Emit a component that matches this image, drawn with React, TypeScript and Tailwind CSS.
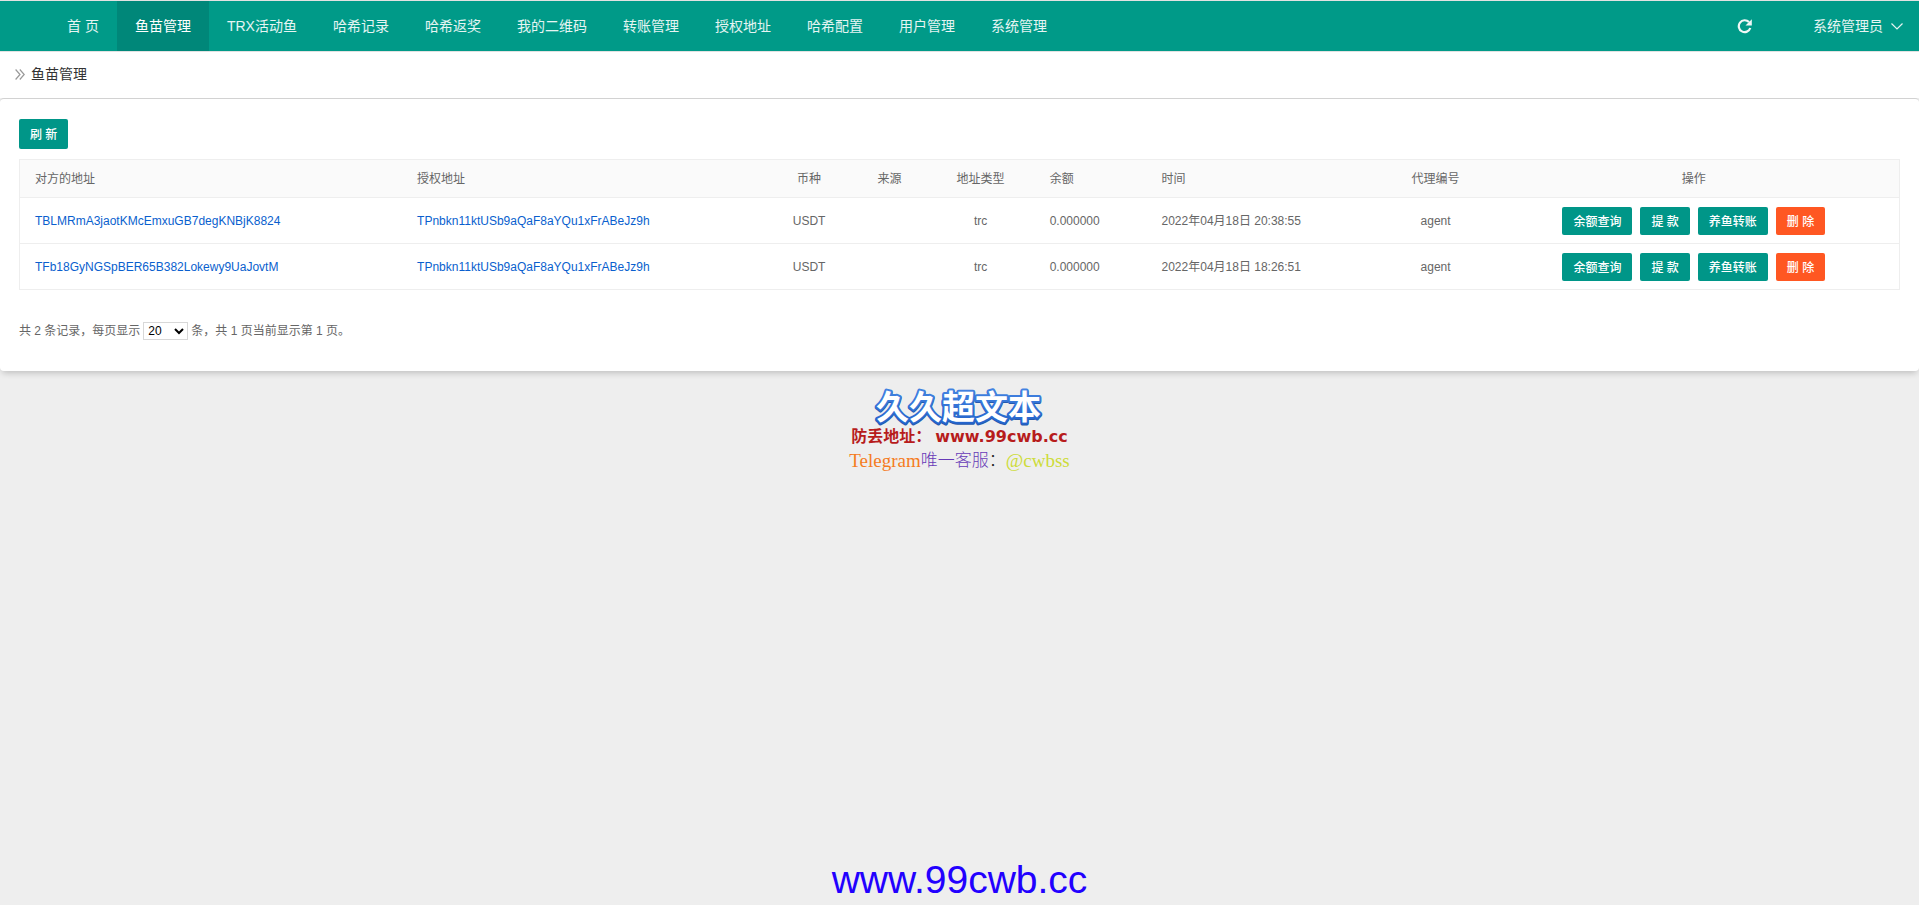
import React from 'react';

const navItems = [
  '首 页',
  '鱼苗管理',
  'TRX活动鱼',
  '哈希记录',
  '哈希返奖',
  '我的二维码',
  '转账管理',
  '授权地址',
  '哈希配置',
  '用户管理',
  '系统管理',
];

const rows = [
  {
    from: 'TBLMRmA3jaotKMcEmxuGB7degKNBjK8824',
    to: 'TPnbkn11ktUSb9aQaF8aYQu1xFrABeJz9h',
    time: '2022年04月18日 20:38:55',
  },
  {
    from: 'TFb18GyNGSpBER65B382Lokewy9UaJovtM',
    to: 'TPnbkn11ktUSb9aQaF8aYQu1xFrABeJz9h',
    time: '2022年04月18日 18:26:51',
  },
];

const columns = [
  { label: '对方的地址', cls: 'w-[20.35%] text-left' },
  { label: '授权地址', cls: 'w-[19.35%] text-left' },
  { label: '币种', cls: 'w-[4.6%] text-center' },
  { label: '来源', cls: 'w-[3.95%] text-center' },
  { label: '地址类型', cls: 'w-[5.75%] text-center' },
  { label: '余额', cls: 'w-[5.95%] text-left' },
  { label: '时间', cls: 'w-[12.55%] text-left' },
  { label: '代理编号', cls: 'w-[5.65%] text-center' },
  { label: '操作', cls: 'w-[21.85%] text-center' },
];

function ActionButton({ label, danger = false }: { label: string; danger?: boolean }) {
  return (
    <button
      type="button"
      className={
        'h-7 rounded-xs px-[11px] pt-0.5 text-xs font-medium whitespace-nowrap text-white ' +
        (danger ? 'bg-[#ff5722]' : 'bg-[#009688]')
      }
    >
      {label}
    </button>
  );
}

function Header() {
  return (
    <header className="flex h-[52px] items-stretch justify-between border-t border-b border-[#e2e2e2] bg-[#009a88] text-sm text-white/90">
      <nav className="flex pl-[49px]">
        {navItems.map((item) => (
          <a
            key={item}
            href="#"
            className={
              'flex items-center px-[18px] whitespace-nowrap ' +
              (item === '鱼苗管理' ? 'bg-[#008779] text-white' : '')
            }
          >
            {item}
          </a>
        ))}
      </nav>
      <div className="flex items-center pr-4">
        <button type="button" aria-label="刷新页面" className="mr-[61px]">
          <svg width="15" height="15" viewBox="0 0 15 15" fill="none">
            <path d="M12 3.1A5.9 5.9 0 1 0 13.3 9" stroke="#f0f7f6" strokeWidth="2.2" />
            <path d="M14.8 0.3V6.6H8.5Z" fill="#f0f7f6" />
          </svg>
        </button>
        <button type="button" className="flex items-center gap-2">
          <span>系统管理员</span>
          <svg width="12" height="7" viewBox="0 0 12 7" fill="none" stroke="#e6f3f1" strokeWidth="1.2">
            <path d="M0.5 0.5L6 6L11.5 0.5" />
          </svg>
        </button>
      </div>
    </header>
  );
}

function Pagination() {
  return (
    <div className="mt-8 flex items-center gap-[3px]">
      <label htmlFor="page-size">共 2 条记录，每页显示</label>
      <select
        id="page-size"
        defaultValue="20"
        className="h-[18px] w-[45px] border border-[#d8d8d8] bg-white text-xs text-black"
      >
        <option>20</option>
        <option>50</option>
        <option>100</option>
      </select>
      <span>条，共 1 页当前显示第 1 页。</span>
    </div>
  );
}

function BrandLogo() {
  return (
    <svg
      width="178"
      height="52"
      viewBox="0 0 178 52"
      className="font-['Noto_Sans_CJK_SC',sans-serif] text-[33px] font-bold"
      strokeLinejoin="round"
    >
      <defs>
        <linearGradient id="brand-edge" x1="0" y1="0" x2="0" y2="1">
          <stop offset="0" stopColor="#4a8ae6" />
          <stop offset="1" stopColor="#1f5fc8" />
        </linearGradient>
      </defs>
      <text x="5" y="41" fill="#2459ad" stroke="#2459ad" strokeWidth="4" aria-hidden="true">
        久久超文本
      </text>
      <text x="5" y="40" fill="#ffffff" stroke="url(#brand-edge)" strokeWidth="4" paintOrder="stroke">
        久久超文本
      </text>
    </svg>
  );
}

export default function App() {
  return (
    <div className="flex min-h-screen flex-col bg-[#eeeeee] font-['Liberation_Sans','Noto_Sans_CJK_SC',sans-serif] text-xs text-[#666666]">
      <Header />
      <div className="flex h-[46px] items-center gap-1.5 bg-white pb-0.5 pl-[15px] text-sm text-[#333333]">
        <svg width="10" height="11" viewBox="0 0 10 11" fill="none" stroke="#999999" strokeWidth="1.2">
          <path d="M0.6 0.5L5 5.5L0.6 10.5M4.8 0.5L9.2 5.5L4.8 10.5" />
        </svg>
        <h1>鱼苗管理</h1>
      </div>
      <main className="rounded-sm border-t border-[#d2d2d2] bg-white px-[19px] pt-5 pb-[31px] shadow-[0_4px_6px_-2px_rgba(0,0,0,0.2)]">
        <button
          type="button"
          className="block h-[30px] rounded-xs bg-[#009688] px-[11px] pt-0.5 font-medium text-white"
        >
          刷 新
        </button>
        <table className="mt-2.5 w-full table-fixed border-collapse border border-[#eeeeee]">
          <thead>
            <tr className="h-[38px] border-b border-[#eeeeee] bg-[#fafafa]">
              {columns.map((c) => (
                <th key={c.label} scope="col" className={'px-[15px] font-normal ' + c.cls}>
                  {c.label}
                </th>
              ))}
            </tr>
          </thead>
          <tbody>
            {rows.map((r) => (
              <tr key={r.from} className="h-[46px] border-b border-[#eeeeee]">
                <td className="px-[15px]">
                  <a href="#" className="text-[#0a5fce]">{r.from}</a>
                </td>
                <td className="px-[15px]">
                  <a href="#" className="text-[#0a5fce]">{r.to}</a>
                </td>
                <td className="text-center">USDT</td>
                <td />
                <td className="text-center">trc</td>
                <td className="px-[15px]">0.000000</td>
                <td className="px-[15px]">{r.time}</td>
                <td className="text-center">agent</td>
                <td>
                  <div className="flex justify-center gap-2">
                    <ActionButton label="余额查询" />
                    <ActionButton label="提 款" />
                    <ActionButton label="养鱼转账" />
                    <ActionButton label="删 除" danger />
                  </div>
                </td>
              </tr>
            ))}
          </tbody>
        </table>
        <Pagination />
      </main>
      <footer className="flex flex-1 flex-col items-center pt-2 whitespace-nowrap">
        <BrandLogo />
        <p className="-mt-1 flex items-center gap-1 text-base leading-5 font-bold text-[#b71c1c]">
          <span>防丢地址：</span>
          <span className="font-['DejaVu_Sans']">www.99cwb.cc</span>
        </p>
        <p className="mt-0.5 flex items-center font-['Liberation_Serif','Noto_Sans_CJK_SC',serif] text-[17px] leading-6 font-light">
          <span className="text-[19px] text-[#f57c1f]">Telegram</span>
          <span className="text-[#673ab7]">唯一客服</span>
          <span className="text-[#222222]">：</span>
          <span className="text-[19px] text-[#cddc39]">@cwbss</span>
        </p>
        <p className="mt-auto text-[39px] leading-[50px] text-[#2200ff]">www.99cwb.cc</p>
      </footer>
    </div>
  );
}
